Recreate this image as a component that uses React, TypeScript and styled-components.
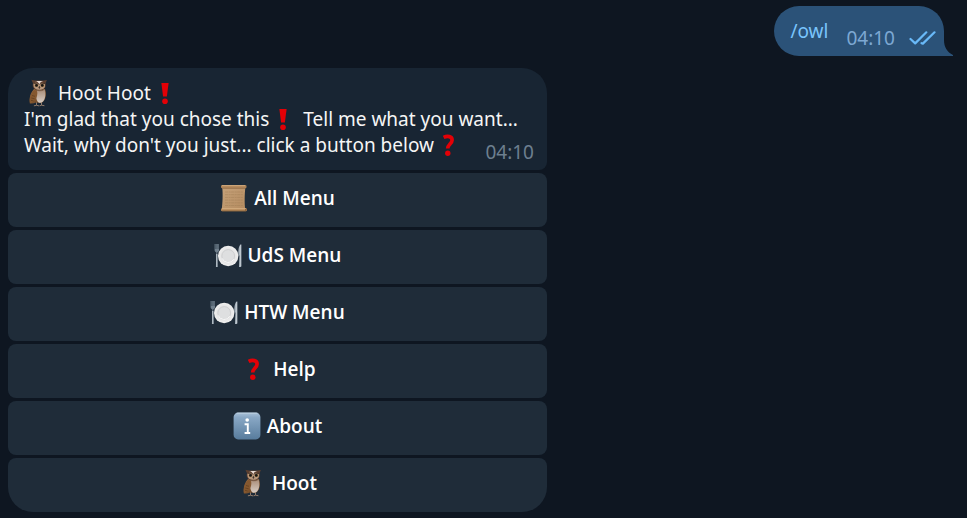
import React from "react";
import styled, { createGlobalStyle } from "styled-components";

const GlobalStyle = createGlobalStyle`
  *, *::before, *::after { box-sizing: border-box; }
  html { background: #0e1621; }
  body {
    margin: 0;
    font-family: "Noto Sans", "Open Sans", sans-serif;
    font-size: 19px;
    line-height: 26px;
    color: #f5f5f5;
  }
`;

const Chat = styled.main`
  display: flex;
  flex-direction: column;
  gap: 12px;
  padding: 6px 8px;
`;

const Outgoing = styled.div`
  display: flex;
  align-self: flex-end;
  align-items: flex-end;
  margin-right: 6px;
`;

const OutBubble = styled.div`
  display: flex;
  padding: 12px 8px 5px 16px;
  background: #2b5278;
  border-radius: 25px 25px 0 25px;
`;

const Command = styled.a`
  margin: 0 18px 7px 0;
  color: #79c4fc;
  text-decoration: none;
`;

const Time = styled.time<{ $out?: boolean }>`
  align-self: flex-end;
  color: ${(p) => (p.$out ? "#7da8d3" : "#6d7f8f")};
`;

const Ticks = styled.svg`
  align-self: flex-end;
  margin-left: 14px;
`;

const Tail = styled.svg`
  display: block;
`;

const Incoming = styled.section`
  display: flex;
  flex-direction: column;
  gap: 3px;
  width: 100%;
  max-width: 539px;
`;

const Message = styled.div`
  padding: 12px 13px 5px 16px;
  background: #182533;
  border-radius: 25px 25px 8px 8px;
`;

const Line = styled.div``;

const LastLine = styled.div`
  display: flex;
  justify-content: space-between;
`;

const LastText = styled.span`
  margin-bottom: 7px;
`;

const Keyboard = styled.div`
  display: grid;
  gap: 3px;
`;

const Key = styled.button`
  height: 54px;
  padding: 0 16px 4px;
  border: 0;
  border-radius: 8px;
  background: #1f2c39;
  color: #ffffff;
  font: inherit;
  font-family: "Open Sans", "Noto Sans", sans-serif;
  font-weight: 600;
  cursor: pointer;

  &:last-child {
    border-radius: 8px 8px 25px 25px;
  }
`;

const Glyph = styled.svg`
  display: inline-block;
  width: 28px;
  height: 28px;
  margin: -3px 1px -3px 0;
  vertical-align: -4px;
`;

const Owl = () => (
  <Glyph viewBox="0 0 28 28" aria-label="owl" role="img">
    <defs>
      <linearGradient id="owlWing" x1="0" y1="0" x2="1" y2="1">
        <stop offset="0" stopColor="#96683f" />
        <stop offset="1" stopColor="#65401f" />
      </linearGradient>
      <linearGradient id="owlBelly" x1="0" y1="0" x2="0" y2="1">
        <stop offset="0" stopColor="#a98d78" />
        <stop offset="1" stopColor="#d8cdc4" />
      </linearGradient>
    </defs>
    <path d="M12.5 23v3.4l-2.6.4M13 26.4l2 .5M17.5 23v3.3l-2 .5M18 26.3l2.4.4" fill="none" stroke="#9c8370" strokeWidth=".9" />
    <path d="M10 10C6.6 13.5 5 18.5 6 24.2c2 .6 4 .2 6-.7l5.6.6c4.2-2.6 5.4-8.8 3.4-14z" fill="url(#owlWing)" />
    <path d="M13 11c-1 5-1.4 9.6 1.2 12.2 3 1.6 5.6-.4 6.7-4.2.7-3 .6-6-.3-8.4z" fill="url(#owlBelly)" />
    <path d="M10.4 11C6.7 14.4 5 19 5.9 24.4c4.7-1.9 8.2-6.6 7.3-12z" fill="#85582f" />
    <path d="M8 16.5l3 .8M7.3 19l3.4.8M7 21.4l2.6.5" stroke="#583719" strokeWidth=".6" />
    <path d="M7.4.8c2.5.9 4.3.7 7.9.7s5.4 0 7.6-.6l-1.3 3.2c.7 4.7-1.6 7.4-6.3 7.4-5 0-7.4-3-6.3-7.2z" fill="#5d4030" />
    <path d="M9.5 4.8c1.8-2 4.5-.8 5.8 1.2 1.4-2 4.2-3 5.6-.8.8 3.8-1.8 5.6-5.5 5.6s-6.3-1.7-5.9-6z" fill="#b8977b" />
    <path d="M11 1.9c2.3.2 3.8 1.6 4.3 3.9.5-2.3 1.8-3.6 4-3.9z" fill="#eadcd3" />
    <circle cx="12.4" cy="6.4" r="1.7" fill="#a98248" />
    <circle cx="18.4" cy="6.4" r="1.7" fill="#a98248" />
    <circle cx="12.5" cy="6.4" r="1.4" fill="#171515" />
    <circle cx="18.3" cy="6.4" r="1.4" fill="#171515" />
    <path d="M9.6 4.2l4.8 1M21 4.2l-4.5 1" stroke="#3b2920" strokeWidth=".8" />
    <path d="M15.4 6.8l1 1.8-1 1.4-1-1.4z" fill="#40342d" />
    <path d="M12 11c2 .9 5.4 1 7.6 0" fill="none" stroke="#74543c" strokeWidth=".8" />
  </Glyph>
);

const Exclamation = () => (
  <Glyph viewBox="0 0 28 28" aria-label="!" role="img">
    <path d="M10.4 4h7.2l-1.7 13.4h-3.8z" fill="#e30006" />
    <circle cx="14" cy="22.2" r="2.8" fill="#e30006" />
  </Glyph>
);

const Question = () => (
  <Glyph viewBox="0 0 28 28" aria-label="?" role="img">
    <path d="M9.6 6.4c4-1.9 8.5-1 8.5 2.6 0 3.8-4.4 4.2-4.4 8.6" fill="none" stroke="#e30006" strokeWidth="3.7" />
    <circle cx="13.8" cy="22.2" r="2.7" fill="#e30006" />
  </Glyph>
);

const Scroll = () => (
  <Glyph viewBox="0 0 28 28" aria-label="scroll" role="img">
    <defs>
      <linearGradient id="paper" x1="0" y1="0" x2="1" y2="1">
        <stop offset="0" stopColor="#c6a27a" />
        <stop offset="1" stopColor="#b58c60" />
      </linearGradient>
    </defs>
    <path d="M2.2 3C3 10 2.6 19 1.8 25h23.4c-.8-6-.6-15 .2-22z" fill="url(#paper)" />
    <path d="M5 8h18M5 10.7h18M5 13.4h18M5 16.1h18M5 18.8h18M5 21.5h18" stroke="#a17e57" strokeWidth=".5" strokeDasharray="3 .6 2 .5" />
    <rect x="1" y="1" width="25.5" height="3.2" rx="1.2" fill="#ae8458" />
    <path d="M2 1.7h23" stroke="#d2ac80" strokeWidth="1" />
    <path d="M2.6 4.4h22.6" stroke="#8a6542" strokeWidth=".6" />
    <rect x="1" y="24.2" width="26" height="3" rx="1.3" fill="#b78a5b" />
    <path d="M2 24.7h24" stroke="#ddb98b" strokeWidth=".8" />
    <path d="M2 27h24" stroke="#72502f" strokeWidth=".6" />
    <path d="M25.9 24.8v1.8" stroke="#6d4526" strokeWidth="1" />
  </Glyph>
);

const Plate = () => (
  <Glyph viewBox="0 0 28 28" aria-label="plate with cutlery" role="img">
    <defs>
      <radialGradient id="dish">
        <stop offset="0" stopColor="#dededf" />
        <stop offset=".6" stopColor="#e3e3e4" />
        <stop offset="1" stopColor="#f0f0ef" />
      </radialGradient>
    </defs>
    <path d="M.6 3v6c0 1.4.8 2 1.7 2.4l-.4 14.6h1.8l-.4-14.6C4.3 11 5 10.4 5 9V3" fill="#71808d" />
    <path d="M1.4 3v5M2.8 3v5M4.2 3v5" stroke="#344553" strokeWidth=".6" />
    <path d="M2.8 13v13" stroke="#c3ccd3" strokeWidth="1.1" />
    <path d="M27.2 3c-2.4 1.6-3 5-2.8 11.5h1L25 26h2.2z" fill="#a9b5bf" />
    <path d="M26.8 4v21" stroke="#dce2e6" strokeWidth=".6" />
    <circle cx="14.2" cy="15" r="10.2" fill="url(#dish)" />
    <circle cx="14.2" cy="15" r="6.4" fill="#dedfe0" stroke="#c5c7c9" strokeWidth=".7" />
    <path d="M8.2 17.4a6.5 6.5 0 0 0 11.7.8" fill="none" stroke="#fafafa" strokeWidth="1" />
  </Glyph>
);

const Info = () => (
  <Glyph viewBox="0 0 28 28" aria-label="information" role="img">
    <defs>
      <linearGradient id="tile" x1="0" y1="0" x2="0" y2="1">
        <stop offset="0" stopColor="#a9c1d8" />
        <stop offset=".18" stopColor="#89a8c5" />
        <stop offset="1" stopColor="#587c9d" />
      </linearGradient>
    </defs>
    <rect x=".6" y=".6" width="26.8" height="26.8" rx="4.5" fill="url(#tile)" />
    <path d="M4 1.2h20" stroke="#c3d5e4" strokeWidth=".8" />
    <circle cx="14.2" cy="8" r="1.8" fill="#fff" />
    <path d="M11.6 12.3h3.2v8.7M11.6 21h5.6" fill="none" stroke="#fff" strokeWidth="1.9" />
  </Glyph>
);

const keys = [
  { label: "All Menu", Icon: Scroll },
  { label: "UdS Menu", Icon: Plate },
  { label: "HTW Menu", Icon: Plate },
  { label: "Help", Icon: Question },
  { label: "About", Icon: Info },
  { label: "Hoot", Icon: Owl },
];

export default function App() {
  return (
    <>
      <GlobalStyle />
      <Chat>
        <Outgoing>
          <OutBubble>
            <Command href="#owl">/owl</Command>
            <Time $out>04:10</Time>
            <Ticks width="27" height="26" viewBox="0 0 27 26" fill="none" stroke="#69b9f8" strokeWidth="2.2" strokeLinecap="round" strokeLinejoin="round" aria-label="Read">
              <path d="M1.5 14l4.7 4.4L17.3 7.3M12.5 18.2l1.4.4L25.5 7.3" />
            </Ticks>
          </OutBubble>
          <Tail width="9" height="16" viewBox="0 0 9 16" aria-hidden="true">
            <path d="M0 0c0 7 3 12 9 15v1H0z" fill="#2b5278" />
          </Tail>
        </Outgoing>
        <Incoming>
          <Message>
            <Line><Owl /> Hoot Hoot<Exclamation /></Line>
            <Line>I'm glad that you chose this<Exclamation /> Tell me what you want...</Line>
            <LastLine>
              <LastText>Wait, why don't you just... click a button below<Question /></LastText>
              <Time>04:10</Time>
            </LastLine>
          </Message>
          <Keyboard>
            {keys.map(({ label, Icon }) => (
              <Key key={label} type="button"><Icon /> {label}</Key>
            ))}
          </Keyboard>
        </Incoming>
      </Chat>
    </>
  );
}
